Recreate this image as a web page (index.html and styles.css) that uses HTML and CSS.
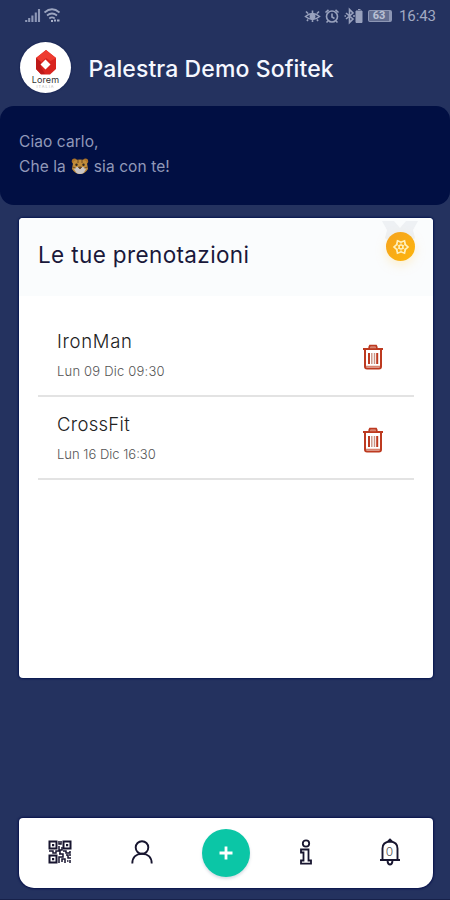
FILE: index.html
```
<!DOCTYPE html>
<html lang="it">
<head>
<meta charset="utf-8">
<meta name="viewport" content="width=device-width, initial-scale=1">
<title>Palestra Demo Sofitek</title>
<link rel="stylesheet" href="styles.css">
</head>
<body>
<div class="status">
  <svg class="signal" width="36" height="16" viewBox="0 0 36 16">
    <path d="M1.2 12v2M4.2 10v4M7.4 7.500v6.500M10.800 4.500v9.500M14 1v13" stroke="#8e98b7" stroke-width="2.100" fill="none"/>
    <path d="M19.500 4.500Q27-2 34.500 4.500M22 7.500Q27 3.500 32 7.500M24.300 10.500Q27 8.200 29.700 10.500" stroke="#9ca5c0" stroke-width="1.700" fill="none"/>
    <path d="M26 13h2M29 12.500h2M32 12.500h2.500" stroke="#a7afc8" stroke-width="2.200"/>
  </svg>
  <div class="status-right">
    <svg width="59" height="18" viewBox="0 0 59 18" fill="none" stroke="#98a1bd" stroke-width="1.600">
      <path d="M1.500 9.500Q8.500 3.500 15.500 9.500Q8.500 15.500 1.500 9.500ZM4 6.500L2 4.500M8.500 6V3.500M13 6.500l2-2M4 12.500l-1 1.500M8.500 13v2M13 12.500l1 1.500"/>
      <circle cx="8.500" cy="9.500" r="2.200" fill="#98a1bd"/>
      <circle cx="28" cy="9.500" r="5.500"/>
      <path d="M28 6.500v3.500l2.500 1.500M21.500 5.500l3-2.700M34.500 5.500l-3-2.700M24 14l-1.500 1.500M32 14l1.500 1.500"/>
      <path d="M42 6l7 6-3.500 3.500v-13L49 6l-7 6M40.500 9h1.500M49 9h2"/>
      <path d="M52 4h6v11.500h-6zM54 2.500h2.500" fill="#98a1bd" stroke-width="1"/>
    </svg>
    <div class="battery">63</div>
    <span class="clock">16:43</span>
  </div>
</div>
<header class="header">
  <div class="logo">
    <svg width="22" height="25" viewBox="0 0 22 25">
      <path d="M11 0L21 8V19L15 24.500H6L1 19V8Z" fill="#d9231f"/>
      <path d="M11 0L21 8L15.500 11L11 8L6 12L1 8Z" fill="#ee3c31"/>
      <path d="M1 8L6 12V17L10 24H6L1 19Z" fill="#bd1919"/>
      <path d="M10.500 9.500L15.500 14.500L10.500 19.500L5.500 14.500Z" fill="#fff"/>
    </svg>
    <span class="logo-name">Lorem</span>
    <span class="logo-sub">ITALIA</span>
  </div>
  <h1 class="title">Palestra Demo Sofitek</h1>
</header>
<section class="greeting">
  <p class="hello">Ciao carlo,</p>
  <p class="wish"><span>Che la</span>
    <svg width="18" height="17" viewBox="0 0 18 17">
      <circle cx="3.500" cy="3.300" r="2.700" fill="#ad7328"/><circle cx="14.500" cy="3.300" r="2.700" fill="#ad7328"/>
      <path d="M2.200 4Q3.500 1.500 9 1.500T15.800 4L17 11Q14 16 9 16T1 11Z" fill="#c18d3a"/>
      <path d="M3 11Q6 8 9 9Q12 8 15 11L12.500 15Q9 17 5.500 15Z" fill="#c8c5c5"/>
      <path d="M7.300 9h3.400L9 11ZM1.500 9l3 1M16.500 9l-3 1M7 2v3M11 2v3" fill="#49331f" stroke="#704d24"/>
      <circle cx="5.500" cy="6.700" r="1.200" fill="#322a25"/><circle cx="12.500" cy="6.700" r="1.200" fill="#322a25"/>
    </svg>
    <span>sia con te!</span></p>
</section>
<main class="card">
  <div class="card-head">
    <h2 class="card-title">Le tue prenotazioni</h2>
    <div class="award">
      <svg class="ribbon" width="36" height="28" viewBox="0 0 36 28"><path d="M0 0H12L18 7L24 0H36L31 9L33 17L24 24H12L3 17L5 9Z" fill="#eef1f4"/></svg>
      <div class="medal">
        <svg width="18" height="18" viewBox="0 0 18 18" fill="none" stroke="#fff1bd">
          <path d="M5.500 2.800L9 4.200L12.500 2.800L13.300 6.500L16 9L13.300 11.500L12.500 15.200L9 13.800L5.500 15.200L4.700 11.500L2 9L4.700 6.500Z" stroke-width="1.700"/>
          <circle cx="9" cy="9" r="2" stroke-width="1.600"/>
          <path d="M9 4.500v2M9 11.500v2M5 6.500l2 1.300M13 6.500l-2 1.300M5 11.500l2-1.300M13 11.500l-2-1.300" stroke-width=".8"/>
        </svg>
      </div>
    </div>
  </div>
  <ul class="list">
    <li class="row">
      <div><div class="name iron">IronMan</div><div class="date first">Lun 09 Dic 09:30</div></div>
      <svg class="trash" width="22" height="26" viewBox="0 0 22 26"><path d="M1 5H21M7 4L8 1.800H14L15 4M3 5V22.500Q3 24.500 5 24.500H17Q19 24.500 19 22.500V5"/><path class="shade" d="M4 22.500H18M8 3.500H14"/><path d="M7 9V20M15.200 9V20"/><path class="soft" d="M9.800 9V20M12.500 9V20"/></svg>
    </li>
    <li class="row">
      <div><div class="name cross">CrossFit</div><div class="date second">Lun 16 Dic 16:30</div></div>
      <svg class="trash" width="22" height="26" viewBox="0 0 22 26"><path d="M1 5H21M7 4L8 1.800H14L15 4M3 5V22.500Q3 24.500 5 24.500H17Q19 24.500 19 22.500V5"/><path class="shade" d="M4 22.500H18M8 3.500H14"/><path d="M7 9V20M15.200 9V20"/><path class="soft" d="M9.800 9V20M12.500 9V20"/></svg>
    </li>
  </ul>
</main>
<nav class="nav">
  <a class="tab"><svg width="24" height="24" viewBox="0 0 24 24" fill="none" stroke="#17152f">
    <path d="M1.500 1.500h7v7h-7zM15.500 1.500h7v7h-7zM1.500 15.500h7v7h-7z" stroke-width="2"/>
    <path d="M4 4h2.200v2.200H4zM18 4h2.200v2.200H18zM4 18h2.200v2.200H4z" fill="#17152f" stroke="none"/>
    <path d="M11 1v3h2V1M11 6v4h3V7M1 11h4v2h3v-2h4v3M15 11h3v2h4v-2M11 14h4v3h-4v6M14 22v-3h3v4M18 15h2v3h3M19 21h1.500M22 20v3M22 14v2" stroke-width="1.500"/>
  </svg></a>
  <a class="tab"><svg width="22" height="24" viewBox="0 0 22 24" fill="none" stroke="#17152f" stroke-width="1.900"><circle cx="11" cy="7.500" r="6.300"/><path d="M1.300 23.500C1.300 17 5.500 13.800 11 13.800S20.700 17 20.700 23.500"/></svg></a>
  <a class="tab"><span class="add"><svg width="16" height="16" viewBox="0 0 16 16"><path d="M8 1.500V14.500M1.500 8H14.500" stroke="#fff" stroke-width="2.800"/></svg></span></a>
  <a class="tab"><svg width="14" height="26" viewBox="0 0 14 26" fill="none" stroke="#17152f" stroke-width="1.800"><circle cx="7" cy="4.500" r="3.200"/><path d="M2 10.500H9.500V21.500H12V24.700H2V21.500H4.500V13.500H2Z"/></svg></a>
  <a class="tab"><span class="bell"><svg width="22" height="28" viewBox="0 0 22 28" fill="none" stroke="#17152f" stroke-width="1.900"><path d="M3.500 21.500V10.500Q3.500 4 11 3.500Q18.500 4 18.500 10.500V21.500M1 22H21M9 3.500L11 1.500L13 3.500M8.500 23Q9 26.500 11 26.500T13.500 23"/></svg><span class="count">0</span></span></a>
</nav>
</body>
</html>
```
FILE: styles.css
```
* { box-sizing: border-box; }
body { margin: 0; width: 450px; height: 900px; overflow: hidden; display: flex; flex-direction: column; background: #24325f; font-family: Inter, "Liberation Sans", sans-serif; border-bottom: 1px solid #17214a; }
h1, h2, p, ul { margin: 0; padding: 0; font-weight: 400; white-space: nowrap; }
svg { display: block; flex: none; }
.status { height: 32px; padding: 0 14px 0 25px; display: flex; justify-content: space-between; align-items: center; }
.signal { margin-top: -1px; }
.status-right { display: flex; align-items: center; color: #a1a9c2; }
.battery { width: 24px; height: 12px; margin-left: 5px; border: 1px solid #8c96b4; border-right-width: 3px; border-radius: 2px; background: #626d90; font: 700 11px/10px Roboto, sans-serif; text-align: center; color: #bbc2d5; }
.clock { margin-left: 7px; font: 400 15px/18px Roboto, sans-serif; width: 37px; letter-spacing: -.1px; }
.header { height: 74px; padding: 10px 20px 0; display: flex; align-items: flex-start; }
.logo { width: 51px; height: 51px; border-radius: 50%; background: #fff; display: flex; flex-direction: column; align-items: center; padding-top: 8px; box-shadow: 0 0 2px #0a1648; }
.logo-name { font: 9px/9px Inter, sans-serif; letter-spacing: .1px; color: #333; }
.logo-sub { font: 4px/5px Inter, sans-serif; letter-spacing: 1px; color: #b5b5b5; }
.title { margin-left: 17.500px; font-size: 23px; line-height: 30px; padding-top: 12px; font-weight: 500; letter-spacing: .1px; color: #f6f8ff; }
.greeting { height: 99px; border-radius: 14px; background: #010f43; padding: 23px 19px; font-size: 15.500px; line-height: 25px; letter-spacing: .08px; color: #9199b9; }
.wish { display: flex; align-items: center; gap: 5px; }
.card { width: 414px; height: 460px; margin: 13px 0 0 19px; border-radius: 4px; background: #fff; box-shadow: 0 0 2px 1px #06164f; }
.card-head { height: 78px; padding: 0 18px 0 19px; display: flex; justify-content: space-between; background: #fafcfd; border-radius: 4px 4px 0 0; }
.card-title { padding-top: 22px; font-size: 22.500px; line-height: 30px; letter-spacing: .37px; color: #19183a; }
.award { position: relative; width: 29px; padding-top: 14px; }
.ribbon { position: absolute; left: -4px; top: 3px; }
.medal { position: relative; width: 29px; height: 29px; border-radius: 50%; background: linear-gradient(135deg, #f5a31f, #fdb50c); box-shadow: 0 4px 10px #ffe5a580; display: grid; place-items: center; }
.list { list-style: none; padding: 18px 19px 0; }
.row { height: 83px; padding: 0 30px 0 19px; border-bottom: 2px solid #e3e3e3; display: flex; justify-content: space-between; }
.name { padding-top: 15px; font-size: 18.500px; line-height: 24px; font-weight: 300; color: #222; }
.iron { letter-spacing: .7px; }
.cross { letter-spacing: .3px; }
.date { margin-top: 9px; font-size: 13px; line-height: 18px; font-weight: 300; color: #555; }
.first { letter-spacing: .2px; }
.trash { margin-top: 30px; fill: none; stroke: #bd3a20; stroke-width: 2; }
.trash .shade { stroke: #d88470; stroke-width: 1.500; }
.trash .soft { stroke: #c99587; stroke-width: 1.400; }
.nav { width: 414px; height: 70px; margin: 140px 0 0 19px; display: grid; grid-template-columns: 81px 83px 82px 82px 82px; border-radius: 4px 4px 15px 15px; background: #fff; box-shadow: 0 0 2px 1px #08124b; }
.tab { display: grid; place-items: center; height: 68px; }
.add { width: 48px; height: 48px; margin: 2px 0 0 3px; border-radius: 50%; background: #0bc6a6; display: grid; place-items: center; box-shadow: 0 2px 3px #7f91a750; }
.bell { position: relative; margin-left: 3px; }
.count { position: absolute; left: 0; right: 0; top: 7px; text-align: center; font-size: 12px; line-height: 14px; font-weight: 300; color: #555; }
```
